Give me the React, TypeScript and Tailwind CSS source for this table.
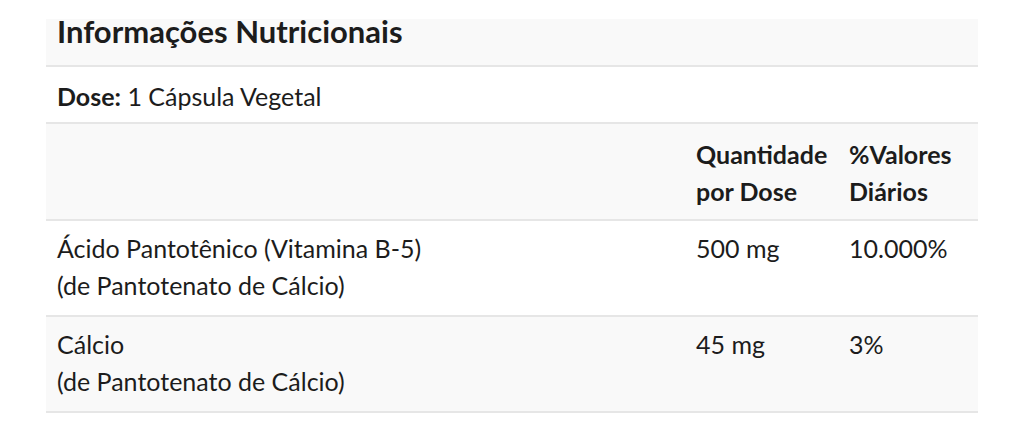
const rows = [
  { name: "Ácido Pantotênico (Vitamina B-5)", source: "(de Pantotenato de Cálcio)", amount: "500 mg", dv: "10.000%" },
  { name: "Cálcio", source: "(de Pantotenato de Cálcio)", amount: "45 mg", dv: "3%" },
];

export default function App() {
  return (
    <div className="min-h-[432px] w-full bg-white pt-[19px] pl-[46px] font-['Lato','Liberation_Sans',sans-serif] text-[#1c1c1c]">
      <div className="w-[932px]">
        {/* title */}
        <div className="h-[48px] border-b-2 border-[#e6e6e6] bg-[#f9f9f9] px-[11px]">
          <h2 className="text-[31px] leading-[24px] font-bold">Informações Nutricionais</h2>
        </div>

        {/* dose */}
        <div className="h-[57px] border-b-2 border-[#e6e6e6] px-[11px] pt-[11px] text-[25px] leading-[37px]">
          <span className="font-bold">Dose:</span> 1 Cápsula Vegetal
        </div>

        {/* header */}
        <div className="grid h-[97px] grid-cols-[639px_153px_140px] border-b-2 border-[#e6e6e6] bg-[#f9f9f9] pt-[12px] text-[25px] leading-[37px] font-bold">
          <div />
          <div className="px-[11px]">
            Quantidade
            <br />
            por Dose
          </div>
          <div className="px-[11px]">
            %Valores
            <br />
            Diários
          </div>
        </div>

        {rows.map((r, i) => (
          <div
            key={r.name}
            className={
              "grid h-[96px] grid-cols-[639px_153px_140px] border-b-2 border-[#e6e6e6] pt-[9px] text-[25px] leading-[37px] " +
              (i % 2 === 1 ? "bg-[#f9f9f9]" : "bg-white")
            }
          >
            <div className="px-[11px]">
              {r.name}
              <br />
              {r.source}
            </div>
            <div className="px-[11px]">{r.amount}</div>
            <div className="px-[11px]">{r.dv}</div>
          </div>
        ))}
      </div>
    </div>
  );
}
